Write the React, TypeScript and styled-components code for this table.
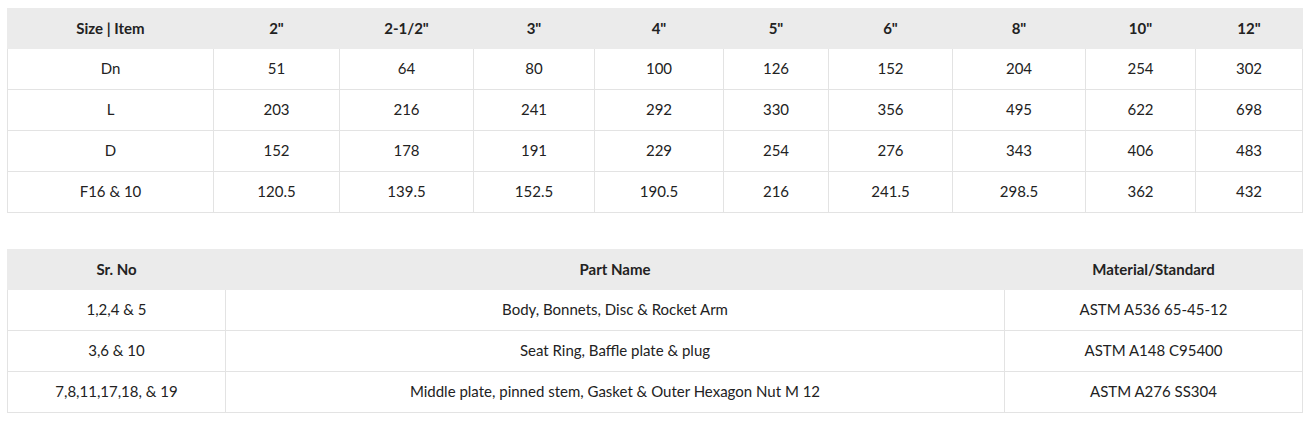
import React from "react";
import styled, { createGlobalStyle } from "styled-components";

const Global = createGlobalStyle`
  html, body { margin: 0; padding: 0; background: #fff; }
  body { padding: 8px 5px 0 7px; font-family: Lato, "Open Sans", sans-serif; color: #222; }
`;

const Page = styled.div`
  display: flex;
  flex-direction: column;
  gap: 36px;
`;

const Table = styled.table`
  width: 100%;
  border-collapse: collapse;
  table-layout: fixed;
  font-size: 15px;
`;

const Col = styled.col<{ $w: number }>`
  width: ${(p) => p.$w}px;
`;

const Th = styled.th`
  height: 37px;
  padding: 0 6px 2px;
  background: #ebebeb;
  border: 1px solid #ebebeb;
  font-weight: 700;
  text-align: center;
  color: #222;
`;

const Td = styled.td`
  height: 38px;
  padding: 0 6px 2px;
  border: 1px solid #e3e3e3;
  text-align: center;
  font-weight: 400;
  color: #222;
`;

const sizes = ['2"', '2-1/2"', '3"', '4"', '5"', '6"', '8"', '10"', '12"'];
const dims: [string, string[]][] = [
  ["Dn", ["51", "64", "80", "100", "126", "152", "204", "254", "302"]],
  ["L", ["203", "216", "241", "292", "330", "356", "495", "622", "698"]],
  ["D", ["152", "178", "191", "229", "254", "276", "343", "406", "483"]],
  ["F16 & 10", ["120.5", "139.5", "152.5", "190.5", "216", "241.5", "298.5", "362", "432"]],
];
const widths1 = [206, 126, 134, 121, 129, 105, 124, 133, 110, 107];

const parts = [
  ["1,2,4 & 5", "Body, Bonnets, Disc & Rocket Arm", "ASTM A536 65-45-12"],
  ["3,6 & 10", "Seat Ring, Baffle plate & plug", "ASTM A148 C95400"],
  ["7,8,11,17,18, & 19", "Middle plate, pinned stem, Gasket & Outer Hexagon Nut M 12", "ASTM A276 SS304"],
];
const widths2 = [218, 779, 298];

export default function App() {
  return (
    <>
      <Global />
      <Page>
        <Table>
          <colgroup>
            {widths1.map((w, i) => (
              <Col key={i} $w={w} />
            ))}
          </colgroup>
          <thead>
            <tr>
              <Th>Size | Item</Th>
              {sizes.map((s) => (
                <Th key={s}>{s}</Th>
              ))}
            </tr>
          </thead>
          <tbody>
            {dims.map(([label, vals]) => (
              <tr key={label}>
                <Td>{label}</Td>
                {vals.map((v, i) => (
                  <Td key={i}>{v}</Td>
                ))}
              </tr>
            ))}
          </tbody>
        </Table>
        <Table>
          <colgroup>
            {widths2.map((w, i) => (
              <Col key={i} $w={w} />
            ))}
          </colgroup>
          <thead>
            <tr>
              <Th>Sr. No</Th>
              <Th>Part Name</Th>
              <Th>Material/Standard</Th>
            </tr>
          </thead>
          <tbody>
            {parts.map((r) => (
              <tr key={r[0]}>
                {r.map((c, i) => (
                  <Td key={i}>{c}</Td>
                ))}
              </tr>
            ))}
          </tbody>
        </Table>
      </Page>
    </>
  );
}
